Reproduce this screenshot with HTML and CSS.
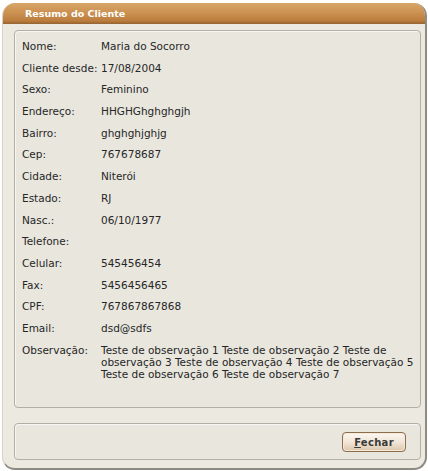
FILE: index.html
```html
<!DOCTYPE html>
<html lang="pt">
<head>
<meta charset="utf-8">
<title>Resumo do Cliente</title>
<link rel="stylesheet" href="styles.css">
</head>
<body>
<div class="window">
  <div class="titlebar">Resumo do Cliente</div>
  <div class="panel">
    <dl class="fields">
      <dt>Nome:</dt><dd>Maria do Socorro</dd>
      <dt>Cliente desde:</dt><dd>17/08/2004</dd>
      <dt>Sexo:</dt><dd>Feminino</dd>
      <dt>Endereço:</dt><dd>HHGHGhghghgjh</dd>
      <dt>Bairro:</dt><dd>ghghghjghjg</dd>
      <dt>Cep:</dt><dd>767678687</dd>
      <dt>Cidade:</dt><dd>Niterói</dd>
      <dt>Estado:</dt><dd>RJ</dd>
      <dt>Nasc.:</dt><dd>06/10/1977</dd>
      <dt>Telefone:</dt><dd></dd>
      <dt>Celular:</dt><dd>545456454</dd>
      <dt>Fax:</dt><dd>5456456465</dd>
      <dt>CPF:</dt><dd>767867867868</dd>
      <dt>Email:</dt><dd>dsd@sdfs</dd>
      <dt>Observação:</dt><dd>Teste de observação 1 Teste de observação 2 Teste de observação 3 Teste de observação 4 Teste de observação 5 Teste de observação 6 Teste de observação 7</dd>
    </dl>
  </div>
  <div class="footer">
    <button class="btn" type="button"><u>F</u>echar</button>
  </div>
</div>
</body>
</html>
```
FILE: styles.css
```css
html, body {
  margin: 0;
  padding: 0;
  background: #ffffff;
}
body {
  font-family: "DejaVu Sans", Verdana, sans-serif;
  font-size: 10.5px;
  color: #262626;
}
.window {
  box-sizing: border-box;
  margin: 3px 0 0 2px;
  width: 425px;
  height: 467px;
  background: #ece9e1;
  border-radius: 13px;
  border-left: 1px solid #d6d2c7;
  border-right: 2px solid #8e8b84;
  border-bottom: 2px solid #8e8b84;
  overflow: hidden;
  display: flex;
  flex-direction: column;
}
.titlebar {
  height: 21px;
  line-height: 21px;
  padding-left: 22px;
  color: #ffffff;
  font-weight: bold;
  font-size: 9.5px;
  background: linear-gradient(#d7a569 0%, #cc9252 45%, #bb7d3d 85%, #946231 100%);
  flex: none;
}
.panel {
  box-sizing: border-box;
  margin: 6px 4px 0 11px;
  height: 378px;
  border: 1px solid #b3afa4;
  border-radius: 4px;
  background: #e9e6de;
  box-shadow: inset 1px 1px 0 #f7f6f2;
  padding: 9px 4px 0 7px;
  flex: none;
}
.fields {
  margin: 0;
  display: grid;
  grid-template-columns: 79px 1fr;
  row-gap: 9.7px;
  line-height: 12px;
}
.fields dt, .fields dd {
  margin: 0;
  min-height: 12px;
}
.footer {
  box-sizing: border-box;
  margin: 15px 4px 0 11px;
  height: 37px;
  border: 1px solid #b3afa4;
  border-radius: 4px;
  background: #e9e6de;
  box-shadow: inset 1px 1px 0 #f7f6f2;
  display: flex;
  align-items: center;
  justify-content: flex-end;
  padding-right: 14px;
  flex: none;
}
.btn {
  box-sizing: border-box;
  width: 64px;
  height: 20px;
  margin-top: 1px;
  padding: 0;
  font-family: "DejaVu Sans", Verdana, sans-serif;
  font-size: 10px;
  font-weight: bold;
  color: #3a3a3a;
  border: 1px solid #8c6d4e;
  border-radius: 4px;
  background: linear-gradient(#fbf7f1 0%, #f1e6d8 50%, #dcc6aa 100%);
  box-shadow: inset 0 0 0 1px #f5ead8;
  letter-spacing: 0.3px;
}
.btn u {
  text-decoration: underline;
}
```
